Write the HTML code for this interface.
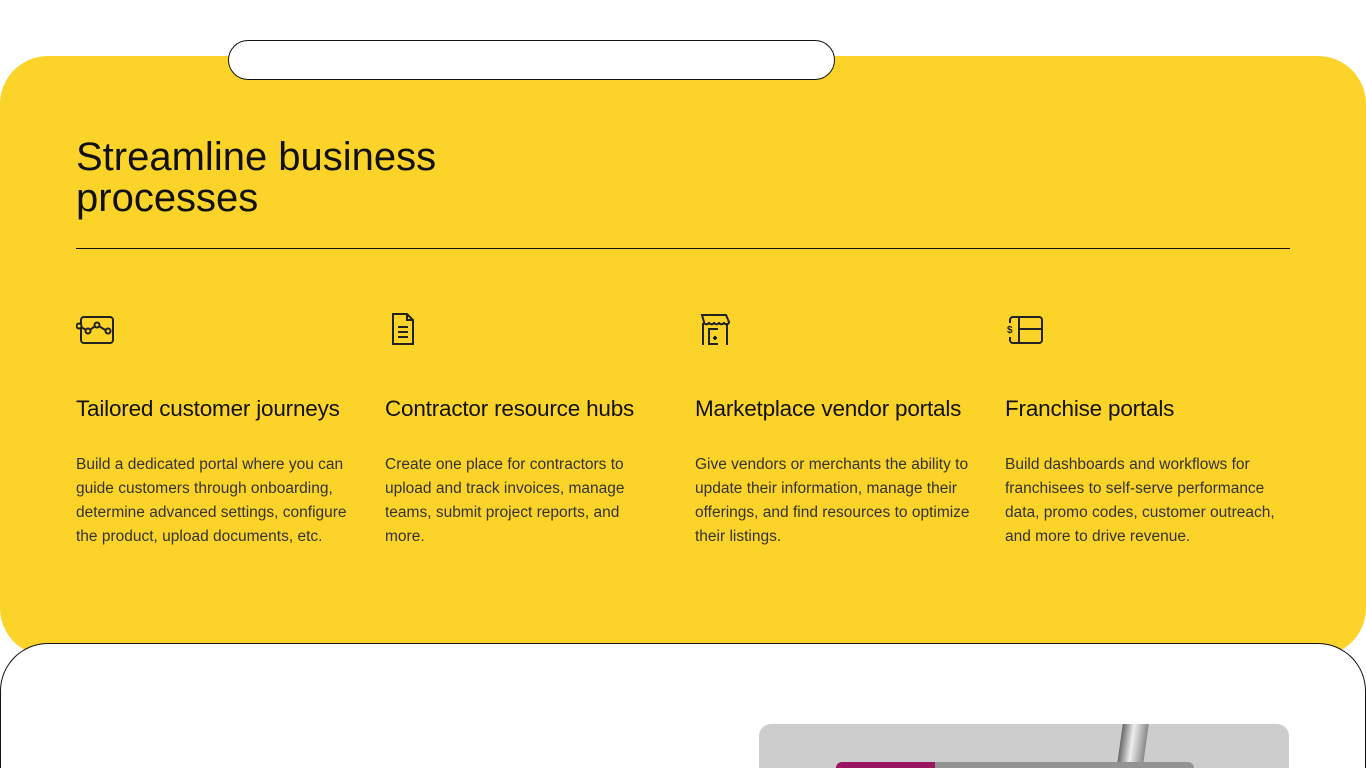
<!DOCTYPE html>
<html><head><meta charset="utf-8"><style>
*{margin:0;padding:0;box-sizing:border-box}
html{width:1366px;height:768px;overflow:hidden}
body{width:1366px;height:768px;overflow:hidden;background:#fff;font-family:"Liberation Sans",sans-serif;position:relative;color:#111}
.pill{position:absolute;left:228px;top:40px;width:607px;height:40px;border:1px solid #111;border-radius:20px;background:#fff;z-index:3}
.yellow{position:absolute;left:0;top:56px;width:1366px;height:600px;background:#fcd429;border-radius:48px}
h1{position:absolute;left:76px;top:137px;font-size:40px;font-weight:400;line-height:41px;letter-spacing:0;color:#111}
.rule{position:absolute;left:76px;top:248px;width:1214px;height:1px;background:#111}
.col{position:absolute;top:310px;width:290px}
.col svg{display:block}
.col h3{position:absolute;top:86px;font-size:22.5px;font-weight:400;white-space:nowrap;letter-spacing:-0.2px}
.col p{position:absolute;top:143px;font-size:15.5px;line-height:24px;color:#333;width:282px}
.bottom{position:absolute;left:0;top:643px;width:1366px;height:125px;border:1px solid #111;border-bottom:none;border-radius:48px 48px 0 0;background:#fff;z-index:2}
.img{position:absolute;left:759px;top:724px;width:530px;height:44px;background:#cdcdcd;border-radius:12px 12px 0 0;z-index:4;overflow:hidden}
.bar{position:absolute;left:77px;top:38px;width:358px;height:20px;background:#939393;border-radius:6px}
.bar i{position:absolute;left:0;top:0;width:99px;height:20px;background:#9c1560;border-radius:6px 0 0 0}
.pole{position:absolute;left:361px;top:0;width:26px;height:40px;background:linear-gradient(90deg,#666,#eee 45%,#888);transform:skewX(-8deg)}
</style></head><body>
<div class="yellow"></div>
<div class="pill"></div>
<h1>Streamline business<br>processes</h1>
<div class="rule"></div>

<div class="col" style="left:76px">
<svg width="42" height="40" viewBox="0 0 42 40" fill="none" stroke="#222" stroke-width="2"><rect x="5" y="7" width="32" height="26" rx="3"/><polyline points="3,16 12,21 21,15 31,21" fill="#fcd429"/><circle cx="3" cy="16" r="2.5" fill="#fcd429"/><circle cx="12" cy="21" r="2.5" fill="#fcd429"/><circle cx="21" cy="15" r="2.5" fill="#fcd429"/><circle cx="32" cy="21" r="2.5" fill="#fcd429"/></svg>
<h3>Tailored customer journeys</h3>
<p>Build a dedicated portal where you can guide customers through onboarding, determine advanced settings, configure the product, upload documents, etc.</p></div>

<div class="col" style="left:385px">
<svg width="40" height="40" viewBox="0 0 40 40" fill="none" stroke="#222" stroke-width="2"><path d="M8 4h14l6 6v24H8z"/><path d="M22 4v6h6"/><path d="M13 17h10M13 22h10M13 27h10"/></svg>
<h3>Contractor resource hubs</h3>
<p style="width:262px">Create one place for contractors to upload and track invoices, manage teams, submit project reports, and more.</p></div>

<div class="col" style="left:695px">
<svg width="40" height="40" viewBox="0 0 40 40" fill="none" stroke="#222" stroke-width="2"><path d="M7 5h24l3 7c0 3-5 3-5 0 0 3-5 3-5 0 0 3-5 3-5 0 0 3-5 3-5 0 0 3-5 3-5 0z"/><path d="M8 13v22M32 13v22"/><path d="M23 19h-9v15h9"/><path d="M18 28h4M20 26v4"/></svg>
<h3>Marketplace vendor portals</h3>
<p style="width:290px">Give vendors or merchants the ability to update their information, manage their offerings, and find resources to optimize their listings.</p></div>

<div class="col" style="left:1005px">
<svg width="42" height="40" viewBox="0 0 42 40" fill="none" stroke="#222" stroke-width="2"><path d="M5 13V10a3 3 0 0 1 3-3h26a3 3 0 0 1 3 3v20a3 3 0 0 1-3 3H8a3 3 0 0 1-3-3v-3"/><path d="M14 7v26M14 19h23"/><text x="2" y="23" font-size="10" font-family="Liberation Sans" font-weight="700" fill="#222" stroke="none">$</text></svg>
<h3>Franchise portals</h3>
<p>Build dashboards and workflows for franchisees to self-serve performance data, promo codes, customer outreach, and more to drive revenue.</p></div>

<div class="bottom"></div>
<div class="img"><div class="pole"></div><div class="bar"><i></i></div></div>
</body></html>
